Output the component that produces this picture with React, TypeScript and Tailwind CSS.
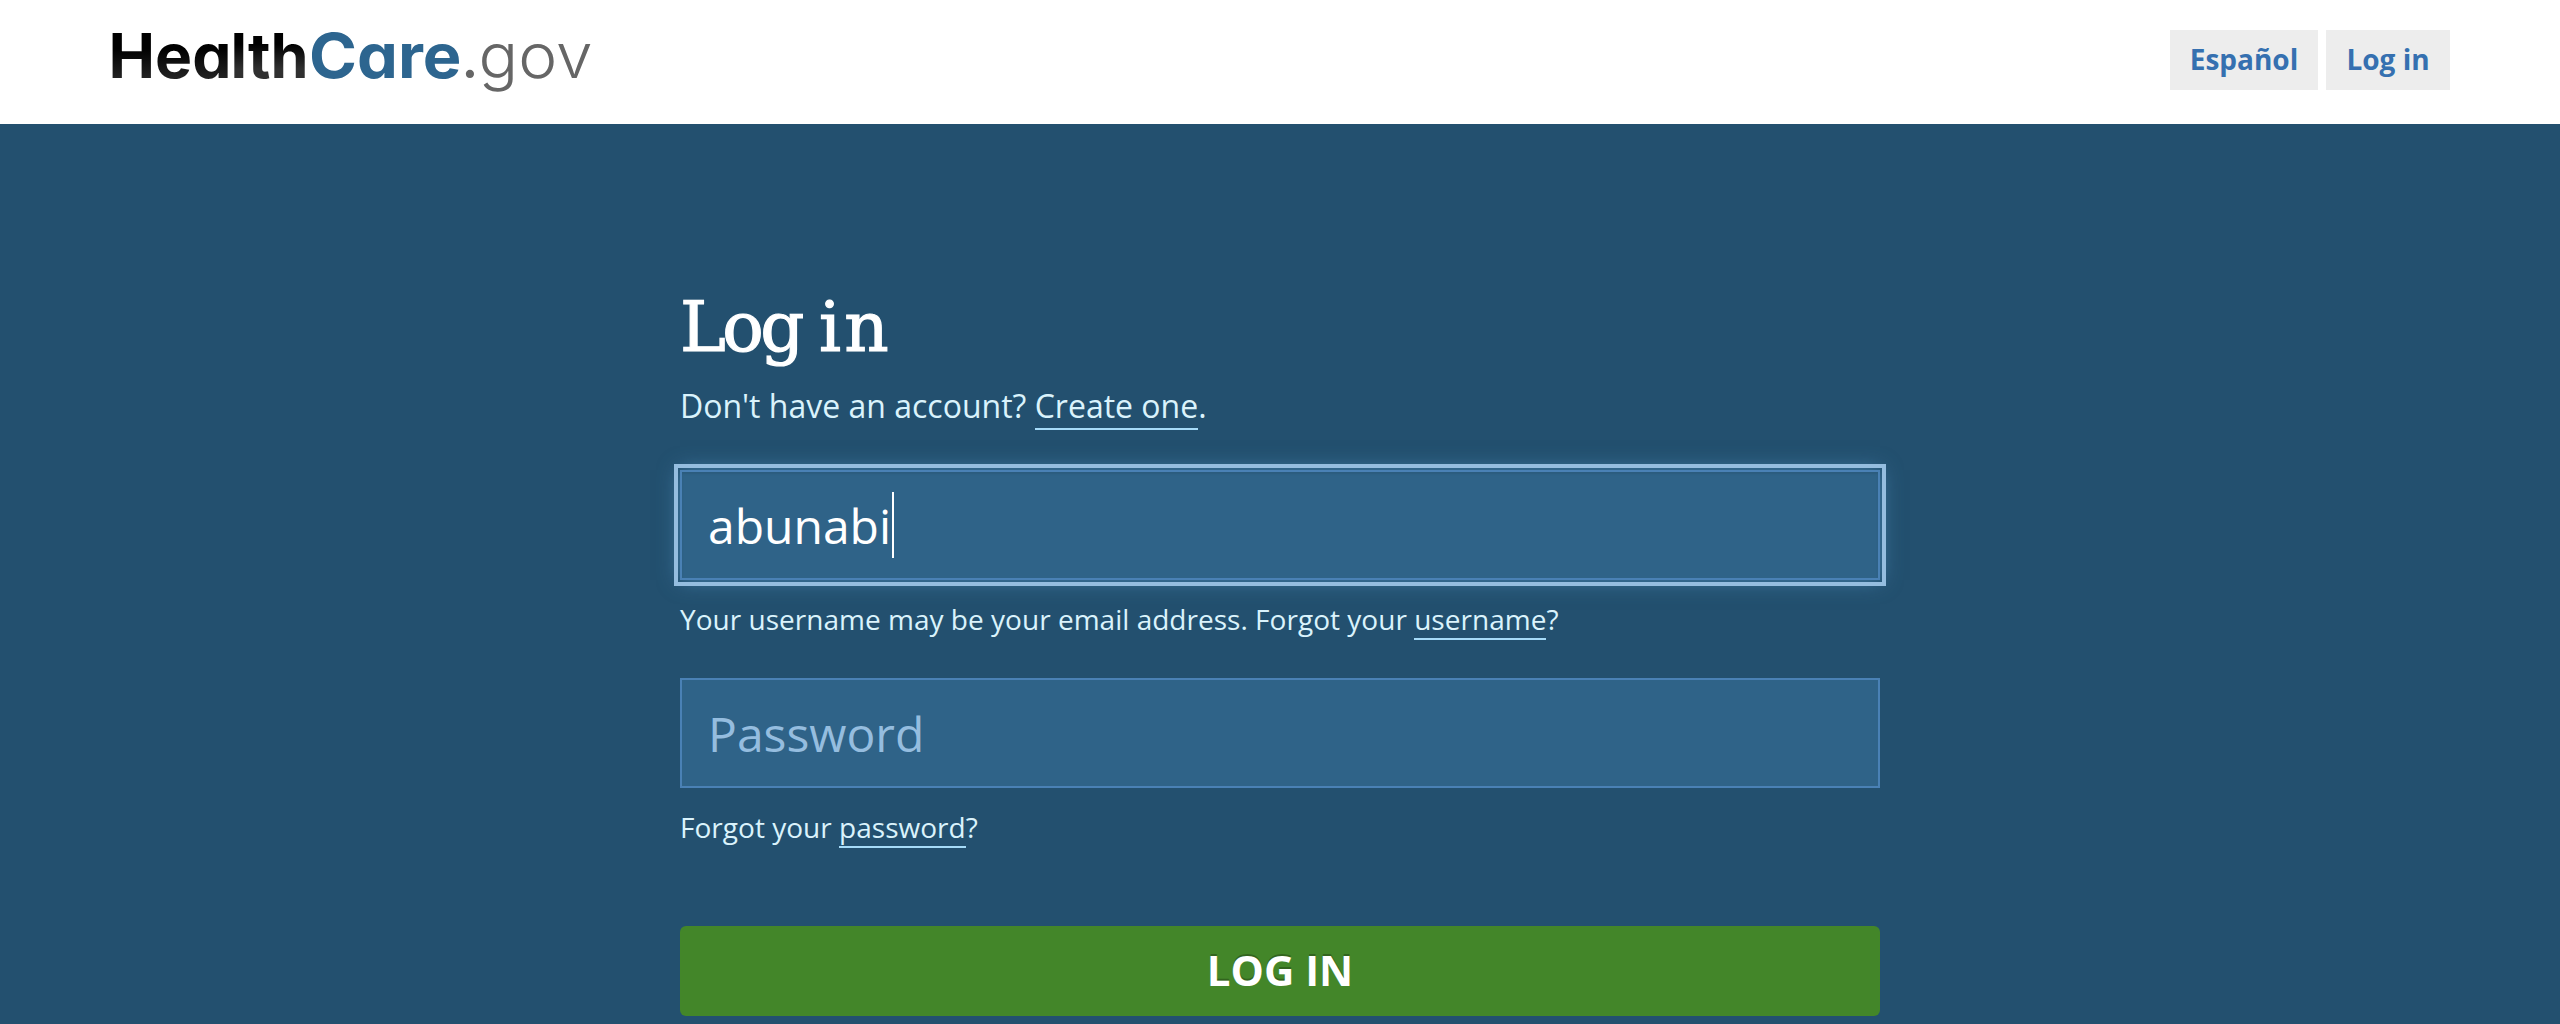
import type { ReactNode } from 'react';

function Logo() {
  return (
    <svg
      className="block h-[110px] w-[510px] overflow-visible font-['Inter',sans-serif]"
      viewBox="100 0 510 110"
      role="img"
      aria-label="HealthCare.gov"
    >
      <defs>
        <linearGradient id="ink" gradientUnits="userSpaceOnUse" x1="0" y1="33" x2="0" y2="78">
          <stop offset="0.35" stopColor="#000" />
          <stop offset="1" stopColor="#222" />
        </linearGradient>
        <linearGradient id="sheen" gradientUnits="userSpaceOnUse" x1="0" y1="33" x2="0" y2="78">
          <stop offset="0.25" stopColor="#000" />
          <stop offset="0.8" stopColor="#303030" />
        </linearGradient>
      </defs>
      <g style={{ fontFeatureSettings: '"cv11"' }}>
        <text x="108.5" y="78" fontSize="62" fontWeight="700" fill="url(#ink)" textLength="123" lengthAdjust="spacingAndGlyphs">
          Hea
        </text>
        <text x="230.5" y="78" fontSize="62" fontWeight="700" fill="url(#sheen)" textLength="78" lengthAdjust="spacingAndGlyphs">
          lth
        </text>
        <text x="309" y="78" fontSize="62" fontWeight="700" fill="#2d658f" textLength="152.500" lengthAdjust="spacingAndGlyphs">
          Care
        </text>
        <text x="461" y="78" fontSize="62" fontWeight="400" fill="#666">.</text>
        <text x="478.500" y="78" fontSize="62" fontWeight="300" fill="#666" textLength="114" lengthAdjust="spacingAndGlyphs">
          gov
        </text>
      </g>
    </svg>
  );
}

function NavButton({ className, children }: { className: string; children: ReactNode }) {
  return (
    <a
      href="#"
      className={`flex h-[60px] items-center justify-center bg-[#ededed] pb-[2px] text-[28px] leading-none font-bold text-[#3570b0] ${className}`}
    >
      {children}
    </a>
  );
}

function TextLink({ className, children }: { className: string; children: ReactNode }) {
  return (
    <a href="#" className={`inline-block border-b-2 border-[#a6dbf8] ${className}`}>
      {children}
    </a>
  );
}

export default function App() {
  return (
    <div className="h-[1024px] w-[2560px] overflow-hidden bg-[#23506f] font-['Open_Sans',sans-serif]">
      <header className="flex h-[124px] items-start justify-between bg-white pr-[110px] pl-[100px]">
        <Logo />
        <nav className="mt-[30px] flex gap-2">
          <NavButton className="w-[148px]">Español</NavButton>
          <NavButton className="w-[124px]">Log in</NavButton>
        </nav>
      </header>

      <main className="mx-auto flex w-[1200px] flex-col text-[#daf3fc]">
        <h1 className="mt-[155px] h-[101px] font-['DejaVu_Serif',serif] text-[69px] leading-[96px] text-white [-webkit-text-stroke:1.2px_white]">
          <span className="tracking-[-3.6px]">Log </span>
          <span className="tracking-[3px]">in</span>
        </h1>
        <p className="mt-[6px] h-[44px] text-[32px] leading-[39px]">
          Don't have an account? <TextLink className="pb-[3px]">Create one</TextLink>.
        </p>

        <div className="mt-[40px] flex h-[110px] items-center border-2 border-[#4a81b5] bg-[#2f6388] pt-[2px] pl-[26px] text-[48px] text-white shadow-[0_0_20px_rgba(102,175,233,0.5),inset_0_2px_2px_rgba(0,0,0,0.075)] outline-4 outline-offset-2 outline-[#95bddf]">
          <span>abunabi</span>
          <span className="mb-[2px] ml-px h-[66px] w-[2px] bg-white" />
        </div>
        <p className="mt-[22px] h-[38px] text-[28px] leading-[34px] tracking-[0.02px]">
          Your username may be your email address. Forgot your <TextLink className="pb-[2px]">username</TextLink>?
        </p>

        <div className="mt-[38px] flex h-[110px] items-center border-2 border-[#4a81b5] bg-[#2f6388] pt-[2px] pl-[26px] text-[48px] text-[#95bddf]">
          Password
        </div>
        <p className="mt-[22px] h-[38px] text-[28px] leading-[34px] tracking-[0.02px]">
          Forgot your <TextLink className="pb-[2px]">password</TextLink>?
        </p>

        <button className="mt-[78px] h-[90px] rounded-[6px] bg-[#438629] pb-[2px] text-[42px] leading-none font-bold text-white [text-shadow:0_-2px_0_rgba(0,0,0,0.25)]">
          LOG IN
        </button>
      </main>
    </div>
  );
}
